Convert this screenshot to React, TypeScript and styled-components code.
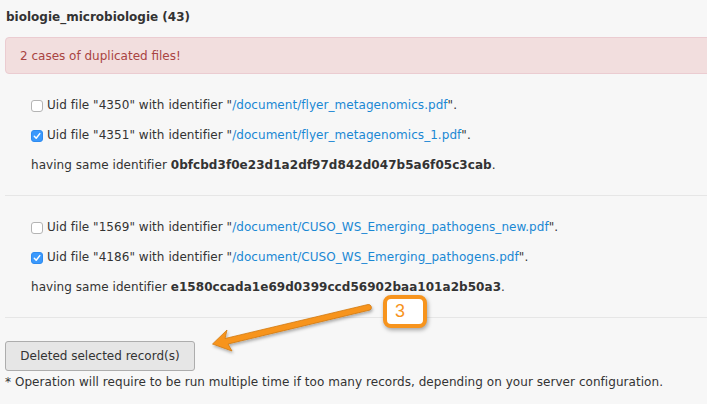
import React from "react";
import styled, { createGlobalStyle } from "styled-components";

const Global = createGlobalStyle`
  html, body { margin: 0; padding: 0; background: #f7f7f7; }
  body { font-family: "DejaVu Sans", Verdana, sans-serif; font-size: 12px; color: #333; }
`;

const Page = styled.div`
  position: relative;
  width: 707px;
  height: 404px;
  overflow: hidden;
  padding: 0 0 0 5px;
  box-sizing: border-box;
`;

const Title = styled.h3`
  margin: 0;
  height: 37px;
  padding: 0 0 4px 1px;
  box-sizing: border-box;
  display: flex;
  align-items: center;
  font-size: 12px;
  font-weight: bold;
  color: #333;
`;

const Alert = styled.div`
  margin-right: -10px;
  height: 37px;
  box-sizing: border-box;
  padding: 0 14px;
  display: flex;
  align-items: center;
  background: #f2dede;
  border: 1px solid #ebccd1;
  border-radius: 4px;
  color: #a94442;
`;

const Group = styled.div`
  padding: 16px 0 15px 26px;
  border-bottom: 1px solid #e6e6e6;
`;

const Row = styled.div`
  height: 30px;
  display: flex;
  align-items: center;
  white-space: nowrap;
  letter-spacing: 0.05px;
`;

const Box = styled.span<{ $checked?: boolean }>`
  width: 12px;
  height: 12px;
  box-sizing: border-box;
  margin: 2px 4px 0 0;
  border-radius: 3px;
  display: inline-flex;
  align-items: center;
  justify-content: center;
  background: ${(p) => (p.$checked ? "#3b99fc" : "#fff")};
  border: 1px solid ${(p) => (p.$checked ? "#2f8cf0" : "#b4b4b4")};
`;

const Link = styled.a`
  color: #1a88d4;
  text-decoration: none;
`;

const Hash = styled.b`
  font-weight: bold;
`;

const Button = styled.button`
  display: block;
  margin-top: 23px;
  width: 190px;
  height: 30px;
  background: #e6e6e6;
  border: 1px solid #adadad;
  border-radius: 3px;
  font-family: "DejaVu Sans", Verdana, sans-serif;
  font-size: 12px;
  color: #333;
  padding: 0;
`;

const Note = styled.div`
  margin-top: 1px;
  line-height: 20px;
  letter-spacing: 0.05px;
`;

const Overlay = styled.svg`
  position: absolute;
  left: 0;
  top: 0;
  pointer-events: none;
`;

const Badge = styled.div`
  position: absolute;
  left: 383px;
  top: 295px;
  width: 44px;
  height: 33px;
  box-sizing: border-box;
  border: 4px solid #f7941d;
  border-radius: 8px;
  background: #fff;
  box-shadow: 1px 2px 4px rgba(0, 0, 0, 0.35);
  color: #f7941d;
  font-family: "Liberation Sans", Arial, sans-serif;
  font-size: 18px;
  line-height: 25px;
  padding-left: 8px;
`;

const Check = () => (
  <svg width="8" height="8" viewBox="0 0 8 8">
    <path d="M1.3 4.3 L3.2 6.2 L6.8 1.6" fill="none" stroke="#fff" strokeWidth="1.5" strokeLinecap="round" strokeLinejoin="round" />
  </svg>
);

type FileRow = { uid: string; path: string; checked: boolean };
type Dup = { files: FileRow[]; hash: string };

const dups: Dup[] = [
  {
    files: [
      { uid: "4350", path: "/document/flyer_metagenomics.pdf", checked: false },
      { uid: "4351", path: "/document/flyer_metagenomics_1.pdf", checked: true },
    ],
    hash: "0bfcbd3f0e23d1a2df97d842d047b5a6f05c3cab",
  },
  {
    files: [
      { uid: "1569", path: "/document/CUSO_WS_Emerging_pathogens_new.pdf", checked: false },
      { uid: "4186", path: "/document/CUSO_WS_Emerging_pathogens.pdf", checked: true },
    ],
    hash: "e1580ccada1e69d0399ccd56902baa101a2b50a3",
  },
];

export default function App() {
  return (
    <>
      <Global />
      <Page>
        <Title>biologie_microbiologie (43)</Title>
        <Alert>2 cases of duplicated files!</Alert>
        {dups.map((d) => (
          <Group key={d.hash}>
            {d.files.map((f) => (
              <Row key={f.uid}>
                <Box $checked={f.checked}>{f.checked && <Check />}</Box>
                Uid file "{f.uid}" with identifier "<Link href="#">{f.path}</Link>".
              </Row>
            ))}
            <Row>
              having same identifier&nbsp;<Hash>{d.hash}</Hash>.
            </Row>
          </Group>
        ))}
        <Button>Deleted selected record(s)</Button>
        <Note>* Operation will require to be run multiple time if too many records, depending on your server configuration.</Note>
        <Overlay width="707" height="404">
          <defs>
            <filter id="sh" x="-10%" y="-30%" width="120%" height="160%">
              <feDropShadow dx="1" dy="2" stdDeviation="1.5" floodColor="#000" floodOpacity="0.3" />
            </filter>
          </defs>
          <g filter="url(#sh)">
            <path
              d="M368 304.5 L225 338.5 L227 330 L212.5 344 L232 351 L228 344 L370 310 A3 3 0 0 0 368 304.5 Z"
              fill="#f7941d"
              stroke="#d27a12"
              strokeWidth="0.8"
              strokeLinejoin="round"
            />
          </g>
        </Overlay>
        <Badge>3</Badge>
      </Page>
    </>
  );
}
